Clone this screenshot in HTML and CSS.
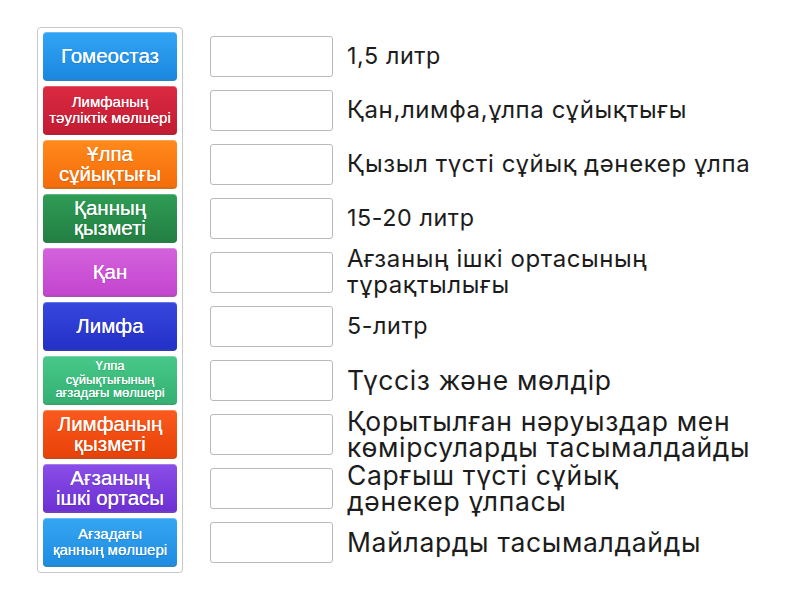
FILE: index.html
```html
<!DOCTYPE html>
<html lang="kk">
<head>
<meta charset="utf-8">
<link rel="stylesheet" href="styles.css">
</head>
<body>
<div class="page">
  <div class="panel">
    <div class="tile c1 big">Гомеостаз</div>
    <div class="tile c2 mid">Лимфаның<br>тәуліктік мөлшері</div>
    <div class="tile c3 big">Ұлпа<br>сұйықтығы</div>
    <div class="tile c4 big">Қанның<br>қызметі</div>
    <div class="tile c5 big">Қан</div>
    <div class="tile c6 big">Лимфа</div>
    <div class="tile c7 small">Үлпа<br>сұйықтығының<br>ағзадағы мөлшері</div>
    <div class="tile c8 big">Лимфаның<br>қызметі</div>
    <div class="tile c9 big">Ағзаның<br>ішкі ортасы</div>
    <div class="tile c10 mid">Ағзадағы<br>қанның мөлшері</div>
  </div>
  <div class="answers">
    <div class="row"><div class="box"></div><div class="label s1">1,5 литр</div></div>
    <div class="row"><div class="box"></div><div class="label s2">Қан,лимфа,ұлпа сұйықтығы</div></div>
    <div class="row"><div class="box"></div><div class="label s2">Қызыл түсті сұйық дәнекер ұлпа</div></div>
    <div class="row"><div class="box"></div><div class="label s1">15-20 литр</div></div>
    <div class="row"><div class="box"></div><div class="label s2">Ағзаның ішкі ортасының<br>тұрақтылығы</div></div>
    <div class="row"><div class="box"></div><div class="label s1">5-литр</div></div>
    <div class="row"><div class="box"></div><div class="label s3">Түссіз және мөлдір</div></div>
    <div class="row"><div class="box"></div><div class="label s3">Қорытылған нәруыздар мен<br>көмірсуларды тасымалдайды</div></div>
    <div class="row"><div class="box"></div><div class="label s3">Сарғыш түсті сұйық<br>дәнекер ұлпасы</div></div>
    <div class="row"><div class="box"></div><div class="label s3">Майларды тасымалдайды</div></div>
  </div>
</div>
</body>
</html>
```

FILE: styles.css
```css
html, body {
  margin: 0;
  padding: 0;
  background: #ffffff;
}

.page {
  display: flex;
  align-items: flex-start;
  gap: 27px;
  padding: 27px 0 0 37px;
}

.panel {
  width: 134px;
  padding: 4px 5px 5px 5px;
  border: 1px solid #c8c8c8;
  border-radius: 4px;
  display: flex;
  flex-direction: column;
  gap: 5px;
  box-shadow: 0 1px 1px rgba(0,0,0,0.08);
}

.tile {
  height: 49px;
  box-sizing: border-box;
  border-radius: 4px;
  display: flex;
  align-items: center;
  justify-content: center;
  text-align: center;
  color: #ffffff;
  font-family: "Liberation Sans", Arial, sans-serif;
  white-space: nowrap;
  padding: 0 2px;
  text-shadow: 0 0 0.5px #fff, 0 1px 1px rgba(0,0,0,0.15);
  border-bottom: 2px solid rgba(0,0,0,0.18);
  box-shadow: inset 0 1px 0 rgba(255,255,255,0.25);
}

.big { font-size: 20.5px; line-height: 20px; }
.mid { font-size: 15px; line-height: 16px; }
.small { font-size: 13px; line-height: 13.5px; }

.c1 { background: linear-gradient(#32a4f5, #1b88e0); }
.c2 { background: linear-gradient(#da2a42, #c41c33); }
.c3 { background: linear-gradient(#ff8a1c, #f56c0a); }
.c4 { background: linear-gradient(#2f9d55, #237f43); }
.c5 { background: linear-gradient(#d462dc, #c445cf); }
.c6 { background: linear-gradient(#3748de, #2430c8); }
.c7 { background: linear-gradient(#48c88a, #34b173); }
.c8 { background: linear-gradient(#fb5a1e, #e84208); }
.c9 { background: linear-gradient(#8a4ee8, #6d30d4); }
.c10 { background: linear-gradient(#35a6f2, #1f8ce2); }

.answers {
  display: flex;
  flex-direction: column;
  gap: 5px;
  padding-top: 5px;
}

.row {
  height: 49px;
  display: flex;
  align-items: center;
  gap: 14px;
}

.box {
  width: 123px;
  height: 41px;
  box-sizing: border-box;
  border: 1px solid #b9b9b9;
  border-radius: 3px;
  background: #fff;
  flex: none;
}

.label {
  font-family: Inter, "Noto Sans", sans-serif;
  letter-spacing: 0.025em;
  line-height: 26px;
  color: #1c1c1c;
  white-space: nowrap;
  margin-top: -2px;
}

.s1 { font-size: 23.3px; }
.s2 { font-size: 24px; }
.s3 { font-size: 26.5px; }
```
